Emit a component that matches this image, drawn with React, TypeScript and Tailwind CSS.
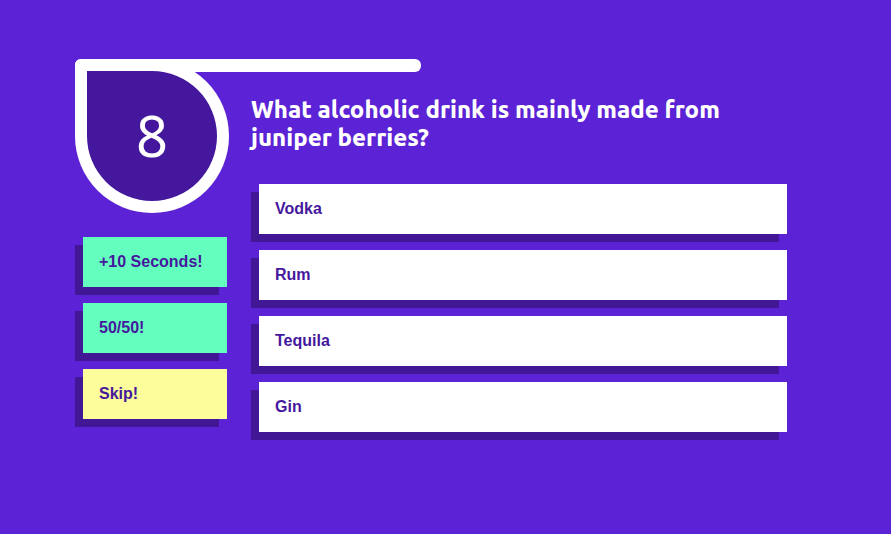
import { useState } from "react";

const question = {
  number: 8,
  text: "What alcoholic drink is mainly made from juniper berries?",
  answers: ["Vodka", "Rum", "Tequila", "Gin"],
};

const lifelines = [
  { label: "+10 Seconds!", tone: "bg-[#64ffbe]" },
  { label: "50/50!", tone: "bg-[#64ffbe]" },
  { label: "Skip!", tone: "bg-[#fdfd9b]" },
];

type BlockButtonProps = {
  label: string;
  tone: string;
  pressed?: boolean;
  onClick?: () => void;
};

function BlockButton({ label, tone, pressed, onClick }: BlockButtonProps) {
  return (
    <button
      type="button"
      aria-pressed={pressed}
      onClick={onClick}
      className={`h-[50px] w-full cursor-pointer px-4 text-left text-base font-bold text-[#45179d] shadow-[-8px_8px_0_#411795] ${tone}`}
    >
      {label}
    </button>
  );
}

export default function App() {
  const [selected, setSelected] = useState<string | null>(null);

  return (
    <main className="min-h-screen bg-[#5b23d5] pt-[59px] pr-[104px] pb-12 pl-[75px] font-['Liberation_Sans',Arial,sans-serif]">
      <div className="relative flex gap-[22px]">
        <div
          aria-hidden="true"
          className="absolute top-0 left-0 h-[13px] w-[346px] rounded-md bg-white"
        />
        <aside className="w-[154px] shrink-0">
          <div className="relative flex h-[154px] items-center justify-center rounded-[77px] rounded-tl-md border-[12px] border-white bg-[#45179d] pb-0.5 font-['Noto_Sans','Open_Sans',sans-serif] text-[56px] leading-none text-white">
            {question.number}
          </div>
          <div className="mt-6 flex flex-col gap-4 pr-0.5 pl-2">
            {lifelines.map((item) => (
              <BlockButton key={item.label} label={item.label} tone={item.tone} />
            ))}
          </div>
        </aside>
        <section className="min-w-0 flex-1 pt-[37px]">
          <h1 className="font-['Ubuntu','Open_Sans','Noto_Sans',sans-serif] text-2xl leading-7 font-extrabold text-white">
            {question.text}
          </h1>
          <div className="mt-8 flex flex-col gap-4 pl-2">
            {question.answers.map((answer) => (
              <BlockButton
                key={answer}
                label={answer}
                tone="bg-white"
                pressed={selected === answer}
                onClick={() => setSelected(answer)}
              />
            ))}
          </div>
        </section>
      </div>
    </main>
  );
}
